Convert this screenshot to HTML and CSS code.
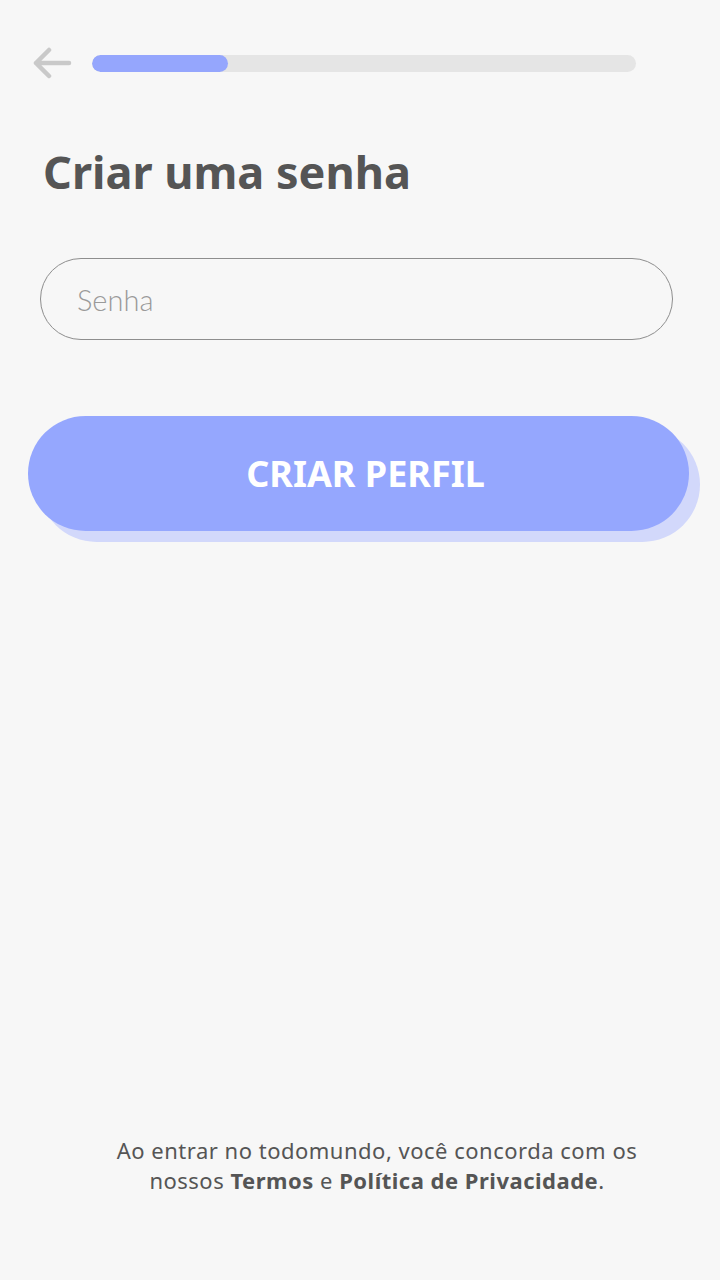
FILE: index.html
```html
<!DOCTYPE html>
<html lang="pt">
<head>
    <meta charset="UTF-8">
    <meta name="viewport" content="width=device-width, initial-scale=1.0">
    <title>Criar uma senha</title>
    <link rel="stylesheet" href="styles.css">
</head>
<body>
    <div class="screen">
        <div class="topbar">
            <button class="back" aria-label="Voltar">
                <svg width="40" height="32" viewBox="0 0 40 32">
                    <path d="M37 16H4M17 3L4 16l13 13" fill="none" stroke="#c9c9c9" stroke-width="4.5" stroke-linecap="round" stroke-linejoin="round"/>
                </svg>
            </button>
            <div class="progress">
                <div class="progress-fill" style="width: 25%"></div>
            </div>
        </div>

        <h1 class="title">Criar uma senha</h1>

        <input class="field" type="password" placeholder="Senha">

        <button class="primary">CRIAR PERFIL</button>

        <p class="terms">
            Ao entrar no todomundo, você concorda com os<br>
            nossos <b>Termos</b> e <b>Política de Privacidade</b>.
        </p>
    </div>
</body>
</html>
```

FILE: styles.css
```css
body {
    margin: 0;
    background-color: #f7f7f7;
    font-family: "Noto Sans", Lato, sans-serif;
    color: #555;
}

.screen {
    min-height: 1280px;
    display: flex;
    flex-direction: column;
    box-sizing: border-box;
}

.topbar {
    display: flex;
    align-items: center;
    gap: 20px;
    padding: 47px 0 0 32px;
}

.back {
    background: none;
    border: none;
    padding: 0;
    width: 40px;
    height: 32px;
    display: flex;
}

.progress {
    width: 544px;
    height: 17px;
    border-radius: 9px;
    background-color: #e5e5e5;
    overflow: hidden;
}

.progress-fill {
    height: 100%;
    border-radius: 9px;
    background-color: #95a6fd;
}

.title {
    margin: 64px 0 0 43px;
    font-size: 45px;
    font-weight: 700;
    line-height: 58px;
    color: #555;
}

.field {
    margin: 57px 0 0 40px;
    width: 633px;
    height: 82px;
    box-sizing: border-box;
    border: 1px solid #8e8e8e;
    border-radius: 41px;
    background: transparent;
    padding: 0 36px;
    font-family: Lato, sans-serif;
    font-weight: 300;
    font-size: 29px;
    color: #555;
    outline: none;
}

.field::placeholder {
    color: #9a9a9a;
}

.primary {
    margin: 76px 0 0 28px;
    width: 661px;
    height: 115px;
    padding: 0 0 0 14px;
    border: none;
    border-radius: 58px;
    background-color: #95a7fe;
    box-shadow: 11px 11px 0 #d2d8fb;
    color: #fff;
    font-family: "Noto Sans", Lato, sans-serif;
    font-size: 36px;
    font-weight: 700;
    cursor: pointer;
}

.terms {
    margin: auto 0 0;
    padding: 0 0 85px 34px;
    text-align: center;
    font-size: 22px;
    line-height: 30px;
    letter-spacing: 0.5px;
    color: #555;
}

.terms b {
    font-weight: 700;
}
```
